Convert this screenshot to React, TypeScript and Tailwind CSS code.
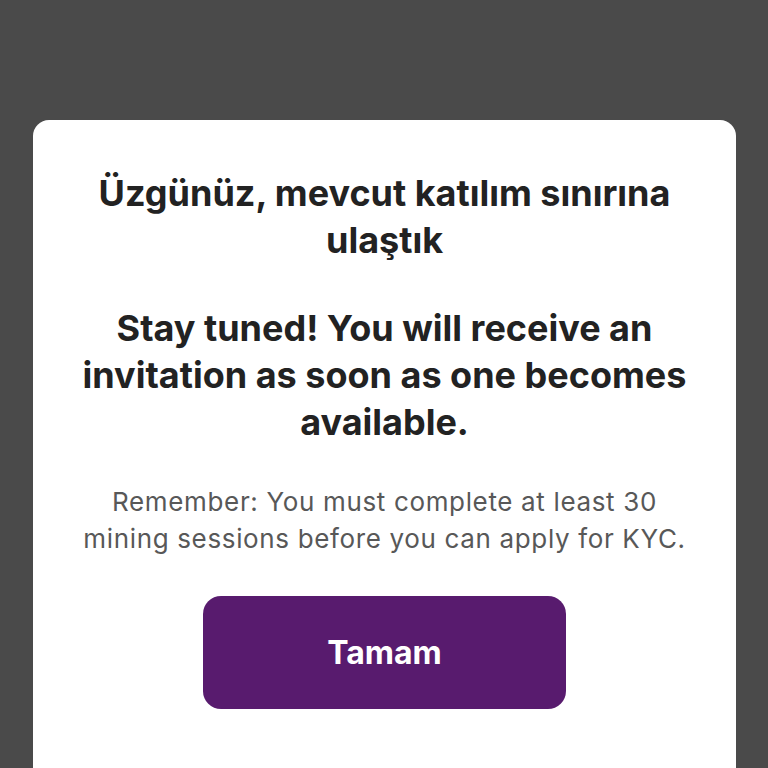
export default function App() {
  return (
    <div className="h-[768px] w-[768px] overflow-hidden bg-[#4a4a4a] pt-[120px] pl-[33px] pr-[32px]" style={{ fontFamily: "Inter, 'Noto Sans', sans-serif" }}>
      <div className="flex h-[700px] flex-col items-center rounded-t-[16px] bg-white px-[10px] pt-[50px] text-center">
        <h1 className="text-[36px] font-bold leading-[47px] text-[#222222]">
          Üzgünüz, mevcut katılım sınırına
          <br />
          ulaştık
        </h1>
        <p className="mt-[41px] text-[36px] font-bold leading-[47px] text-[#222222]">
          Stay tuned! You will receive an
          <br />
          invitation as soon as one becomes
          <br />
          available.
        </p>
        <p className="mt-[37px] text-[26px] leading-[37px] tracking-[0.65px] text-[#585858]">
          Remember: You must complete at least 30
          <br />
          mining sessions before you can apply for KYC.
        </p>
        <button className="mt-[39px] h-[113px] w-[363px] rounded-[18px] bg-[#581b6e] text-[32px] font-bold text-white">
          Tamam
        </button>
      </div>
    </div>
  );
}
